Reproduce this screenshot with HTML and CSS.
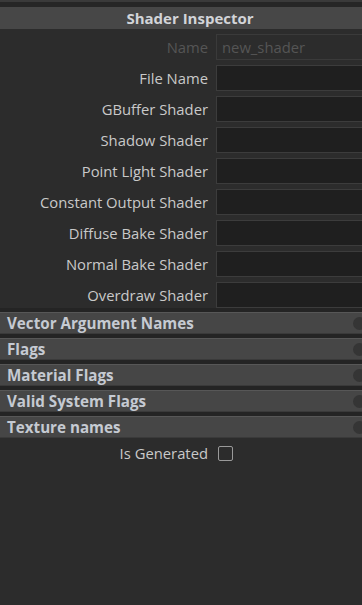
FILE: index.html
```html
<!DOCTYPE html>
<html>
<head>
<meta charset="utf-8">
<link rel="stylesheet" href="styles.css">
</head>
<body>
<div class="topstrip"></div>
<div class="panel">
  <div class="title">Shader Inspector</div>
  <div class="fields">
    <div class="row disabled"><span class="label">Name</span><div class="input">new_shader</div></div>
    <div class="row"><span class="label">File Name</span><div class="input"></div></div>
    <div class="row"><span class="label">GBuffer Shader</span><div class="input"></div></div>
    <div class="row"><span class="label">Shadow Shader</span><div class="input"></div></div>
    <div class="row"><span class="label">Point Light Shader</span><div class="input"></div></div>
    <div class="row"><span class="label">Constant Output Shader</span><div class="input"></div></div>
    <div class="row"><span class="label">Diffuse Bake Shader</span><div class="input"></div></div>
    <div class="row"><span class="label">Normal Bake Shader</span><div class="input"></div></div>
    <div class="row"><span class="label">Overdraw Shader</span><div class="input"></div></div>
  </div>
  <div class="sections">
    <div class="section"><span>Vector Argument Names</span><i class="dot"></i></div>
    <div class="section"><span>Flags</span><i class="dot"></i></div>
    <div class="section"><span>Material Flags</span><i class="dot"></i></div>
    <div class="section"><span>Valid System Flags</span><i class="dot"></i></div>
    <div class="section"><span>Texture names</span><i class="dot"></i></div>
  </div>
  <div class="row check"><span class="label">Is Generated</span><div class="box"></div></div>
</div>
</body>
</html>
```
FILE: styles.css
```css
* { box-sizing: border-box; }
html, body { margin: 0; padding: 0; }
body {
  width: 362px;
  height: 605px;
  background: #2c2c2c;
  font-family: "Open Sans", "Noto Sans", sans-serif;
  font-size: 14.8px;
  color: #c9c9c9;
  overflow: hidden;
}
.topstrip {
  height: 7px;
  background: #262626;
  border-top: 2px solid #3a3a3a;
}
.title {
  height: 22px;
  background: #474747;
  color: #d2d4d8;
  font-weight: 700;
  font-size: 15px;
  text-align: center;
  line-height: 22px;
  padding-left: 18px;
}
.fields {
  display: flex;
  flex-direction: column;
  gap: 5px;
  padding-top: 5px;
}
.row {
  display: flex;
  align-items: center;
  height: 26px;
  gap: 8px;
}
.label {
  width: 208px;
  flex: none;
  text-align: right;
  white-space: nowrap;
}
.input {
  flex: 1;
  height: 26px;
  background: #1f1f1f;
  border: 1px solid #3c3c3c;
  border-right: none;
}
.disabled .label { color: #555555; }
.disabled .input {
  background: #2c2c2c;
  border-color: #3a3a3a;
  color: #555555;
  padding-left: 5px;
  line-height: 24px;
}
.sections {
  display: flex;
  flex-direction: column;
  gap: 4px;
  margin-top: 0;
  padding-top: 4px;
  background: #2c2c2c;
}
.section {
  position: relative;
  height: 22px;
  background: #464646;
  border-top: 1px solid #575757;
  border-bottom: 1px solid #3a3a3a;
  font-weight: 700;
  font-size: 15.2px;
  color: #c5cad2;
  line-height: 20px;
  padding-left: 7px;
  display: flex;
  align-items: center;
  box-shadow: 0 -4px 0 #242424;
}
.dot {
  position: absolute;
  right: -4px;
  top: 4px;
  width: 13px;
  height: 13px;
  border-radius: 50%;
  background: #353535;
}
.check { margin-top: 2px; }
.box {
  width: 15px;
  height: 15px;
  border: 1.5px solid #9a9a9a;
  border-radius: 2px;
  margin-left: 2px;
}
```
